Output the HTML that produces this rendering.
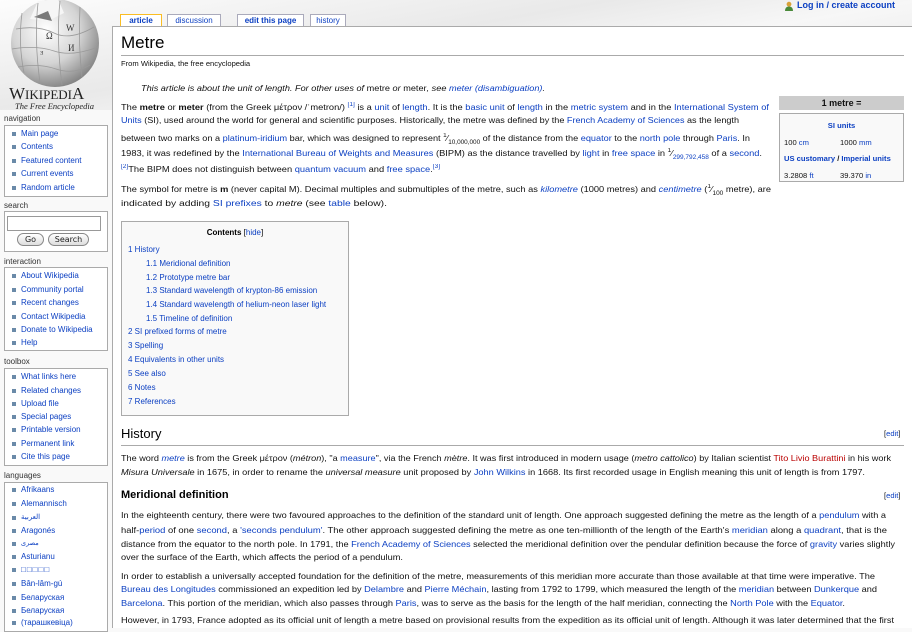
<!DOCTYPE html>
<html><head><meta charset="utf-8">
<style>
*{margin:0;padding:0;box-sizing:border-box}
body{width:912px;height:628px;overflow:hidden;position:relative;background:#f9f9f9;font-family:"Liberation Sans","Noto Sans CJK SC",sans-serif;color:#111}
#bgtop{position:absolute;left:0;top:0;width:912px;height:110px;background:linear-gradient(170deg,#fdfdfd 0%,#e9e9e9 40%,#f7f7f7 60%,#ececec 80%,#f9f9f9 100%)}
a,.l{color:#0b3fc2;text-decoration:none}
.r{color:#ba0000}
.ab{position:absolute;white-space:nowrap}
.ln{position:absolute;white-space:nowrap;font-size:8.6px;left:121px;line-height:11px}
.ln>span{display:inline-block;transform-origin:0 0}
sup,.sup{font-size:6px;vertical-align:4px}
.sub{font-size:6px;vertical-align:-3px}
.tab{position:absolute;top:14px;height:12px;border:1px solid #aab;border-bottom:none;background:#fff;font-size:8px;text-align:center;line-height:11px;color:#0b3fc2}
.pl{position:absolute;left:4px;font-size:8px;color:#333}
.pb{position:absolute;left:4px;width:104px;background:#fff;border:1px solid #aaa;border-left:1px solid #aaa}
.pb div{position:absolute;left:16px;font-size:8px;line-height:10px;color:#0b3fc2;white-space:nowrap}
.pb div:before{content:"";position:absolute;left:-9px;top:3px;width:4px;height:4px;background:#6a8aa8}
#content{position:absolute;left:112px;top:26px;width:800px;height:602px;background:#fff;border-left:1px solid #aaa;border-top:1px solid #aaa}
.btn{position:absolute;height:13px;border:1px solid #888;border-radius:7px;background:linear-gradient(#fff,#ddd);font-size:8px;text-align:center;line-height:11px;font-family:"DejaVu Sans",sans-serif;color:#222}
</style></head><body>
<div id="bgtop"></div>

<!-- logo -->
<svg class="ab" style="left:8px;top:-1px" width="96" height="90" viewBox="0 0 96 90">
<defs><radialGradient id="g" cx="40%" cy="35%" r="70%"><stop offset="0" stop-color="#fff"/><stop offset="0.55" stop-color="#d4d4d4"/><stop offset="1" stop-color="#7e7e7e"/></radialGradient></defs>
<circle cx="47" cy="44" r="44" fill="url(#g)"/>
<path d="M30 2 L50 0 L56 14 L40 22 L22 20 Z" fill="#f6f6f6"/>
<path d="M26 18 L44 22 L40 12 Z" fill="#7a7a7a"/>
<g stroke="#999" stroke-width="0.8" fill="none">
<path d="M8 30 Q30 26 46 34 T86 28"/><path d="M4 50 Q28 46 46 52 T90 48"/><path d="M10 68 Q30 64 48 70 T82 66"/>
<path d="M30 4 Q26 40 32 84"/><path d="M52 2 Q48 40 54 86"/><path d="M72 8 Q70 44 74 78"/><path d="M14 14 Q10 44 16 74"/>
</g>
<g font-family="Liberation Serif,serif" font-size="9" fill="#333"><text x="38" y="40">Ω</text><text x="58" y="32">W</text><text x="60" y="52">И</text><text x="32" y="58">ᴲ</text></g>
</svg>
<div class="ab" style="left:9px;top:84px;font-family:'Liberation Serif',serif;font-size:17px;color:#222;letter-spacing:0px">W<span style="font-size:13px">IKIPEDI</span>A</div>
<div class="ab" style="left:15px;top:101px;font-family:'Liberation Serif',serif;font-style:italic;font-size:8.5px;color:#222">The Free Encyclopedia</div>

<!-- top right -->
<svg class="ab" style="left:784px;top:1px" width="10" height="10" viewBox="0 0 10 10"><circle cx="5" cy="3.2" r="2.4" fill="#d9a23a"/><path d="M1 10 Q1 5.5 5 5.5 Q9 5.5 9 10Z" fill="#4a8a3a"/></svg>
<div class="ab" style="left:797px;top:0px;font-size:9px;font-weight:bold;color:#0b3fc2">Log in / create account</div>

<!-- tabs -->
<div class="tab" style="left:120px;width:42px;border-color:#fabd23;font-weight:bold;">article</div>
<div class="tab" style="left:167px;width:54px">discussion</div>
<div class="tab" style="left:237px;width:67px;font-weight:bold">edit this page</div>
<div class="tab" style="left:310px;width:36px">history</div>

<!-- sidebar -->
<div class="pl" style="top:114px">navigation</div>
<div class="pb" style="top:125px;height:72px">
<div style="top:3px">Main page</div><div style="top:16px">Contents</div><div style="top:30px">Featured content</div><div style="top:43px">Current events</div><div style="top:57px">Random article</div></div>
<div class="pl" style="top:201px">search</div>
<div class="pb" style="top:211px;height:41px"></div>
<div class="ab" style="left:7px;top:216px;width:94px;height:15px;border:1px solid #999;background:#fff"></div>
<div class="btn" style="left:17px;top:233px;width:27px">Go</div>
<div class="btn" style="left:48px;top:233px;width:41px">Search</div>
<div class="pl" style="top:257px">interaction</div>
<div class="pb" style="top:267px;height:84px">
<div style="top:3px">About Wikipedia</div><div style="top:17px">Community portal</div><div style="top:30px">Recent changes</div><div style="top:44px">Contact Wikipedia</div><div style="top:57px">Donate to Wikipedia</div><div style="top:70px">Help</div></div>
<div class="pl" style="top:357px">toolbox</div>
<div class="pb" style="top:368px;height:98px">
<div style="top:3px">What links here</div><div style="top:17px">Related changes</div><div style="top:30px">Upload file</div><div style="top:43px">Special pages</div><div style="top:56px">Printable version</div><div style="top:70px">Permanent link</div><div style="top:83px">Cite this page</div></div>
<div class="pl" style="top:471px">languages</div>
<div class="pb" style="top:482px;height:150px">
<div style="top:2px">Afrikaans</div><div style="top:16px">Alemannisch</div><div style="top:30px;font-size:7px">العربية</div><div style="top:43px">Aragonés</div><div style="top:56px;font-size:6.5px">مصرى</div><div style="top:69px">Asturianu</div><div style="top:82px;letter-spacing:1px">□□□□□</div><div style="top:96px">Bân-lâm-gú</div><div style="top:110px">Беларуская</div><div style="top:123px">Беларуская</div><div style="top:135px;left:16px">(тарашкевіца)</div></div>

<!-- content -->
<div id="content"></div>
<div class="ab" style="left:121px;top:33px;font-size:17px;color:#000">Metre</div>
<div class="ab" style="left:121px;top:55px;width:783px;height:1px;background:#aaa"></div>
<div class="ab" style="left:121px;top:59px;font-size:7.6px">From Wikipedia, the free encyclopedia</div>

<div class="ln" style="left:141px;top:83px;font-style:italic" data-x="545"><span>This article is about the unit of length. For other uses of <i style="font-style:normal">metre</i> or <i style="font-style:normal">meter</i>, see <a>meter (disambiguation)</a>.</span></div>

<div class="ln" style="top:100px" data-x="769"><span>The <b>metre</b> or <b>meter</b> (from the Greek μέτρον /ˈmetron/) <sup class="l">[1]</sup> is a <a>unit</a> of <a>length</a>. It is the <a>basic unit</a> of <a>length</a> in the <a>metric system</a> and in the <a>International System of</a></span></div>
<div class="ln" style="top:115px" data-x="739"><span><a>Units</a> (SI), used around the world for general and scientific purposes. Historically, the metre was defined by the <a>French Academy of Sciences</a> as the length</span></div>
<div class="ln" style="top:131px" data-x="750"><span>between two marks on a <a>platinum-iridium</a> bar, which was designed to represent <span class="sup">1</span>⁄<span class="sub">10,000,000</span> of the distance from the <a>equator</a> to the <a>north pole</a> through <a>Paris</a>. In</span></div>
<div class="ln" style="top:146px" data-x="762"><span>1983, it was redefined by the <a>International Bureau of Weights and Measures</a> (BIPM) as the distance travelled by <a>light</a> in <a>free space</a> in <span class="sup">1</span>⁄<a class="sub">299,792,458</a> of a <a>second</a>.</span></div>
<div class="ln" style="top:162px" data-x="440"><span><sup class="l">[2]</sup>The BIPM does not distinguish between <a>quantum vacuum</a> and <a>free space</a>.<sup class="l">[3]</sup></span></div>

<div class="ln" style="top:182px" data-x="771"><span>The symbol for metre is <b>m</b> (never capital M). Decimal multiples and submultiples of the metre, such as <a><i>kilometre</i></a> (1000 metres) and <a><i>centimetre</i></a> (<span class="sup">1</span>⁄<span class="sub">100</span> metre), are</span></div>
<div class="ln" style="top:198px" data-x="387"><span>indicated by adding <a>SI prefixes</a> to <i>metre</i> (see <a>table</a> below).</span></div>

<!-- infobox -->
<div class="ab" style="left:779px;top:96px;width:125px;height:14px;background:#ccc;text-align:center;font-size:9px;font-weight:bold;line-height:14px">1 metre =</div>
<div class="ab" style="left:779px;top:113px;width:125px;height:69px;background:#f9f9f9;border:1px solid #aaa;font-size:7.6px">
<div class="ab" style="left:0;width:123px;top:7px;text-align:center;font-weight:bold;color:#0b3fc2">SI units</div>
<div class="ab" style="left:4px;top:24px">100 <a>cm</a></div><div class="ab" style="left:60px;top:24px">1000 <a>mm</a></div>
<div class="ab" style="left:4px;top:40px;font-weight:bold"><a>US customary</a> / <a>Imperial units</a></div>
<div class="ab" style="left:4px;top:57px">3.2808 <a>ft</a></div><div class="ab" style="left:60px;top:57px">39.370 <a>in</a></div>
</div>

<!-- toc -->
<div class="ab" style="left:121px;top:221px;width:228px;height:195px;background:#f9f9f9;border:1px solid #aaa;font-size:8px;color:#0b3fc2">
<div class="ab" style="left:0;width:226px;top:6px;text-align:center;color:#000;font-weight:bold">Contents <span style="font-weight:normal">[<a>hide</a>]</span></div>
<div class="ab" style="left:6px;top:23px">1 History</div>
<div class="ab" style="left:24px;top:37px">1.1 Meridional definition</div>
<div class="ab" style="left:24px;top:51px">1.2 Prototype metre bar</div>
<div class="ab" style="left:24px;top:64px">1.3 Standard wavelength of krypton-86 emission</div>
<div class="ab" style="left:24px;top:78px">1.4 Standard wavelength of helium-neon laser light</div>
<div class="ab" style="left:24px;top:92px">1.5 Timeline of definition</div>
<div class="ab" style="left:6px;top:105px">2 SI prefixed forms of metre</div>
<div class="ab" style="left:6px;top:119px">3 Spelling</div>
<div class="ab" style="left:6px;top:133px">4 Equivalents in other units</div>
<div class="ab" style="left:6px;top:147px">5 See also</div>
<div class="ab" style="left:6px;top:161px">6 Notes</div>
<div class="ab" style="left:6px;top:175px">7 References</div>
</div>

<!-- history -->
<div class="ab" style="left:121px;top:426px;font-size:13px;color:#000">History</div>
<div class="ab" style="left:884px;top:429px;font-size:7.6px">[<a>edit</a>]</div>
<div class="ab" style="left:121px;top:445px;width:783px;height:1px;background:#aaa"></div>
<div class="ln" style="top:453px" data-x="891"><span>The word <a><i>metre</i></a> is from the Greek μέτρον (<i>métron</i>), "a <a>measure</a>", via the French <i>mètre</i>. It was first introduced in modern usage (<i>metro cattolico</i>) by Italian scientist <a class="r">Tito Livio Burattini</a> in his work</span></div>
<div class="ln" style="top:467px" data-x="865"><span><i>Misura Universale</i> in 1675, in order to rename the <i>universal measure</i> unit proposed by <a>John Wilkins</a> in 1668. Its first recorded usage in English meaning this unit of length is from 1797.</span></div>

<div class="ab" style="left:121px;top:489px;font-size:11px;font-weight:bold;color:#000">Meridional definition</div>
<div class="ab" style="left:884px;top:491px;font-size:7.6px">[<a>edit</a>]</div>
<div class="ln" style="top:510px" data-x="886"><span>In the eighteenth century, there were two favoured approaches to the definition of the standard unit of length. One approach suggested defining the metre as the length of a <a>pendulum</a> with a</span></div>
<div class="ln" style="top:525px" data-x="887"><span>half-<a>period</a> of one <a>second</a>, a <a>'seconds pendulum'</a>. The other approach suggested defining the metre as one ten-millionth of the length of the Earth's <a>meridian</a> along a <a>quadrant</a>, that is the</span></div>
<div class="ln" style="top:539px" data-x="895"><span>distance from the equator to the north pole. In 1791, the <a>French Academy of Sciences</a> selected the meridional definition over the pendular definition because the force of <a>gravity</a> varies slightly</span></div>
<div class="ln" style="top:552px" data-x="403"><span>over the surface of the Earth, which affects the period of a pendulum.</span></div>
<div class="ln" style="top:571px" data-x="875"><span>In order to establish a universally accepted foundation for the definition of the metre, measurements of this meridian more accurate than those available at that time were imperative. The</span></div>
<div class="ln" style="top:584px" data-x="877"><span><a>Bureau des Longitudes</a> commissioned an expedition led by <a>Delambre</a> and <a>Pierre Méchain</a>, lasting from 1792 to 1799, which measured the length of the <a>meridian</a> between <a>Dunkerque</a> and</span></div>
<div class="ln" style="top:598px" data-x="845"><span><a>Barcelona</a>. This portion of the meridian, which also passes through <a>Paris</a>, was to serve as the basis for the length of the half meridian, connecting the <a>North Pole</a> with the <a>Equator</a>.</span></div>
<div class="ln" style="top:615px" data-x="894"><span>However, in 1793, France adopted as its official unit of length a metre based on provisional results from the expedition as its official unit of length. Although it was later determined that the first</span></div>

<script>
document.querySelectorAll('.ln').forEach(function(d){
  var s=d.firstElementChild;var x=parseFloat(d.getAttribute('data-x'));
  var left=d.getBoundingClientRect().left;var w=s.getBoundingClientRect().width;
  if(w>0){s.style.transform='scaleX('+((x-left)/w)+')';}
});
</script>
</body></html>
